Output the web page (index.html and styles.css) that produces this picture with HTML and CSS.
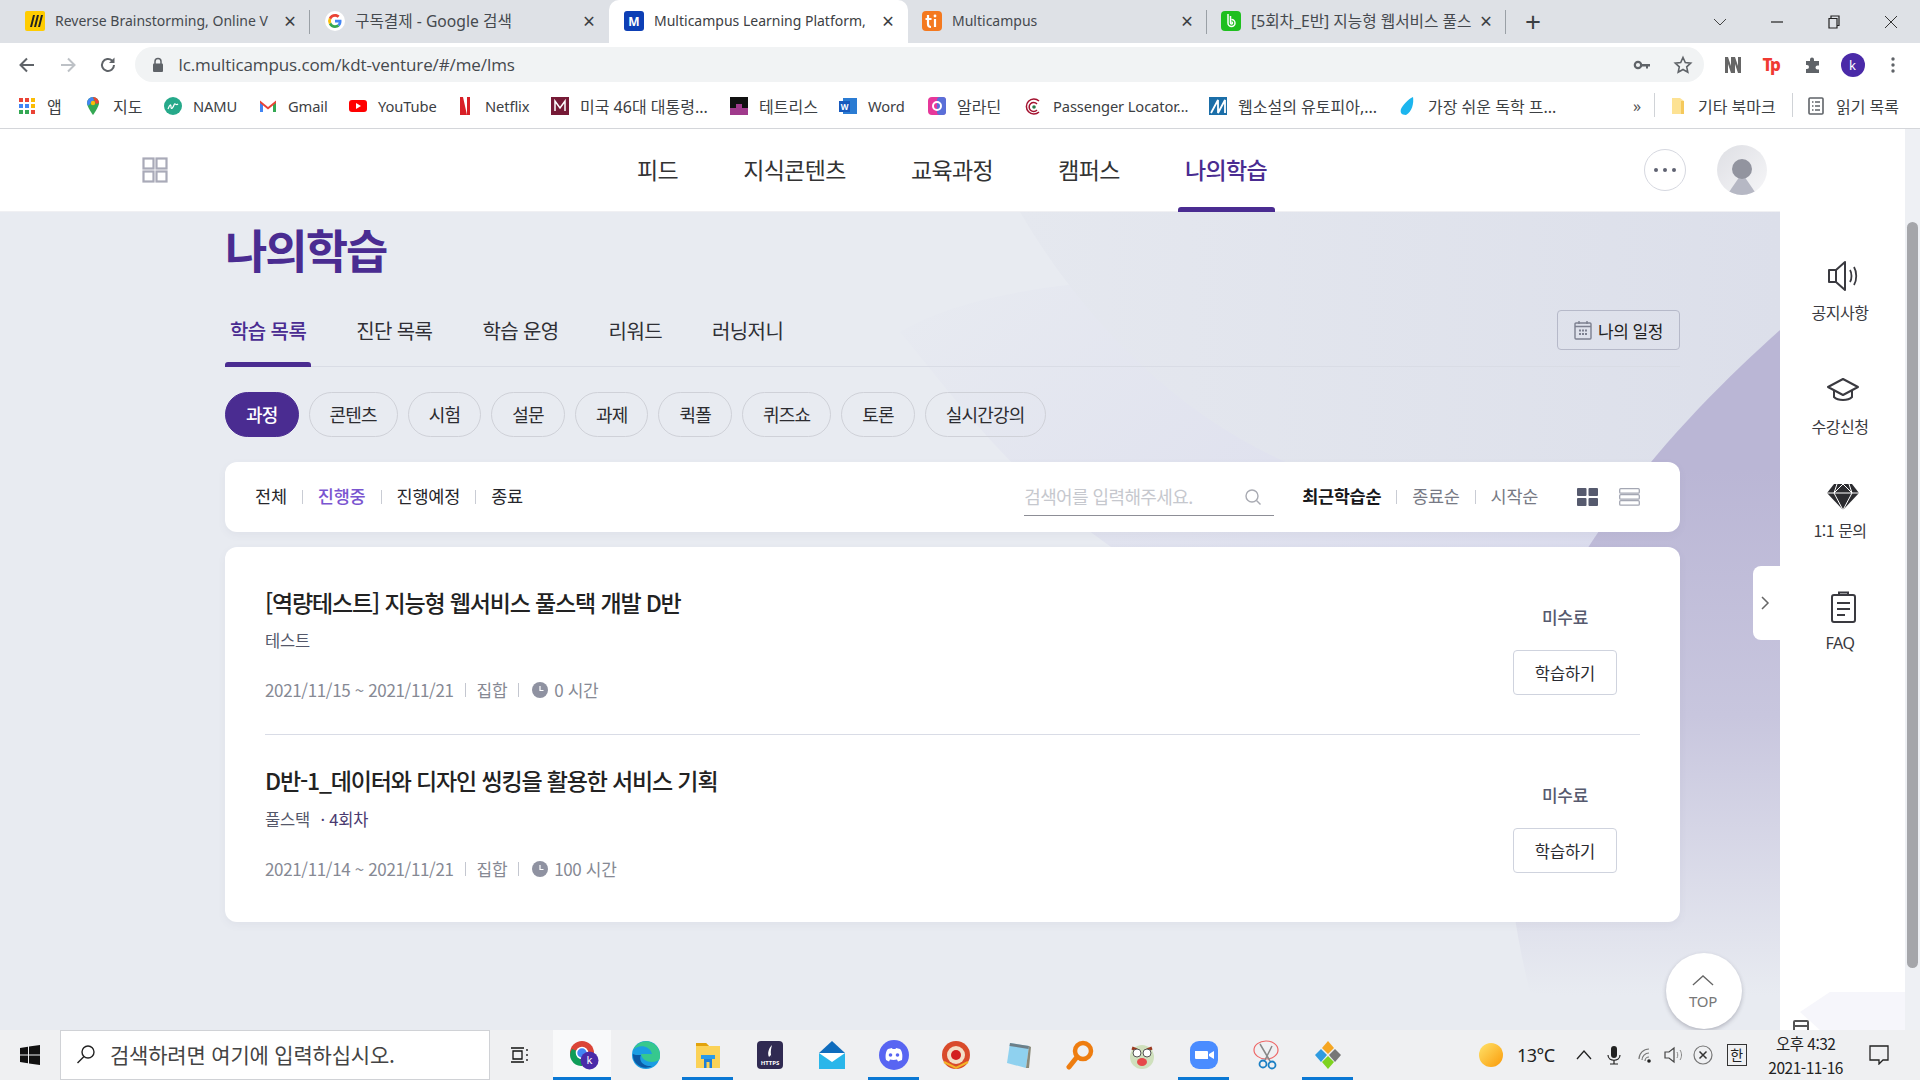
FILE: index.html
```html
<!DOCTYPE html>
<html lang="ko">
<head>
<meta charset="utf-8">
<title>Multicampus Learning Platform</title>
<link rel="stylesheet" href="styles.css">
</head>
<body>
<div class="screen">
  <div class="tabstrip">
    <div class="tab">
      <svg class="fav" viewBox="0 0 20 20"><rect width="20" height="20" rx="2" fill="#fc0"/><path d="M5 16 8 4h2L7 16zM9 16l3-12h2l-3 12zM13 16l3-12h2l-3 12z" fill="#222"/></svg>
      <span class="tab-title">Reverse Brainstorming, Online V</span>
      <span class="tab-x">×</span><i class="tab-sep"></i>
    </div>
    <div class="tab">
      <svg class="fav" viewBox="0 0 20 20"><circle cx="10" cy="10" r="10" fill="#fff"/><path d="M16.5 10.2c0-.5 0-1-.1-1.4H10v2.7h3.7c-.2.9-.7 1.6-1.4 2.1l2.200 1.700c1.300-1.200 2-3 2-5.100z" fill="#4285f4"/><path d="M10 17c1.800 0 3.400-.6 4.500-1.700l-2.200-1.700c-.6.4-1.400.7-2.300.7-1.800 0-3.300-1.200-3.800-2.800l-2.300 1.800C5 15.500 7.300 17 10 17z" fill="#34a853"/><path d="M6.200 11.500a4 4 0 0 1 0-2.900L3.900 6.800a7 7 0 0 0 0 6.500z" fill="#fbbc05"/><path d="M10 5.700c1 0 1.900.4 2.600 1l2-2C13.400 3.600 11.800 3 10 3 7.300 3 5 4.500 3.900 6.800l2.300 1.800C6.700 6.900 8.200 5.700 10 5.700z" fill="#ea4335"/></svg>
      <span class="tab-title tab-ko">구독결제 - Google 검색</span>
      <span class="tab-x">×</span>
    </div>
    <div class="tab tab-active">
      <svg class="fav" viewBox="0 0 20 20"><rect width="20" height="20" rx="3" fill="#0d3fb5"/><text x="10" y="14.500" text-anchor="middle" class="fav-letter">M</text></svg>
      <span class="tab-title">Multicampus Learning Platform,</span>
      <span class="tab-x">×</span>
    </div>
    <div class="tab">
      <svg class="fav" viewBox="0 0 20 20"><rect width="20" height="20" rx="4" fill="#f4791f"/><path d="M6 4v9a3 3 0 0 0 3 3M3.500 8h6M13 8v8" stroke="#fff" stroke-width="2.200" fill="none"/><circle cx="13" cy="5" r="1.400" fill="#fff"/></svg>
      <span class="tab-title">Multicampus</span>
      <span class="tab-x">×</span><i class="tab-sep"></i>
    </div>
    <div class="tab">
      <svg class="fav" viewBox="0 0 20 20"><rect width="20" height="20" rx="4" fill="#1fbf1f"/><path d="M7 3v9a3.500 3.500 0 1 0 3.500-3.500M9.500 5v7a1 1 0 1 0 1-1" stroke="#fff" stroke-width="1.500" fill="none"/></svg>
      <span class="tab-title tab-ko">[5회차_E반] 지능형 웹서비스 풀스</span>
      <span class="tab-x">×</span><i class="tab-sep"></i>
    </div>
    <span class="tab-plus">+</span>
    <div class="win-controls">
      <svg class="win-ic" viewBox="0 0 14 14"><path d="M1 4l6 6 6-6" fill="none" stroke="#444"/></svg>
      <svg class="win-ic" viewBox="0 0 14 14"><path d="M1 7h12" fill="none" stroke="#222" stroke-width="1.200"/></svg>
      <svg class="win-ic" viewBox="0 0 14 14"><path d="M2 3.500h8v9.500H2zM4 3.500V1h8v9.500h-2" fill="none" stroke="#222" stroke-width="1.200"/></svg>
      <svg class="win-ic" viewBox="0 0 14 14"><path d="M1 1l12 12M13 1 1 13" fill="none" stroke="#333"/></svg>
    </div>
  </div>

  <div class="toolbar">
    <svg class="tool-ic" viewBox="0 0 20 20"><path d="M17 10H4M10 3.500 3.500 10l6.500 6.500" fill="none" stroke="#5f6368" stroke-width="2"/></svg>
    <svg class="tool-ic" viewBox="0 0 20 20"><path d="M3 10h13M10 3.500l6.500 6.500-6.500 6.500" fill="none" stroke="#bdc1c6" stroke-width="2"/></svg>
    <svg class="tool-ic" viewBox="0 0 20 20"><path d="M16 10a6 6 0 1 1-1.800-4.300" fill="none" stroke="#5f6368" stroke-width="2"/><path d="M16.500 2.500v5.500H11z" fill="#5f6368"/></svg>
    <div class="omnibox">
      <svg class="lock" viewBox="0 0 12 16"><path d="M3 7V4.500a3 3 0 0 1 6 0V7" fill="none" stroke="#5f6368" stroke-width="1.500"/><rect x="1" y="6.500" width="10" height="8.500" rx="1" fill="#5f6368"/></svg>
      <span class="url">lc.multicampus.com/kdt-venture/#/me/lms</span>
      <svg class="omni-ic" viewBox="0 0 20 20"><circle cx="6" cy="10" r="3.200" fill="none" stroke="#5f6368" stroke-width="2.200"/><path d="M9 9h9v2.500h-2v2h-2v-2H9z" fill="#5f6368"/></svg>
      <svg class="omni-ic" viewBox="0 0 20 20"><path d="m10 2.500 2.300 5 5.400.6-4 3.700 1.100 5.400-4.800-2.700-4.800 2.700 1.100-5.400-4-3.700 5.400-.6z" fill="none" stroke="#5f6368" stroke-width="1.600"/></svg>
    </div>
    <div class="ext">
      <svg class="omni-ic" viewBox="0 0 20 20"><path d="M2 18V2h3l3 9V2h4l3 9V2h3v16h-3l-3-9v9H8l-3-9v9z" fill="#666"/></svg>
      <span class="ext-tp">Tp</span>
      <svg class="omni-ic" viewBox="0 0 20 20"><path d="M3 6h4V4.500a2 2 0 0 1 4 0V6h5v4.500h-1.500a2 2 0 0 0 0 4H16V18H3v-4h1a2 2 0 0 0 0-4H3z" fill="#5f6368"/></svg>
      <span class="ext-avatar">k</span>
      <svg class="omni-ic" viewBox="0 0 20 20"><circle cx="10" cy="4" r="1.700" fill="#5f6368"/><circle cx="10" cy="10" r="1.700" fill="#5f6368"/><circle cx="10" cy="16" r="1.700" fill="#5f6368"/></svg>
    </div>
  </div>

  <div class="bookmarks">
    <div class="bm bm-ko"><svg class="bm-ic" viewBox="0 0 18 18"><rect x="1" y="1" width="4" height="4" fill="#ea4335"/><rect x="7" y="1" width="4" height="4" fill="#ea4335"/><rect x="13" y="1" width="4" height="4" fill="#fbbc05"/><rect x="1" y="7" width="4" height="4" fill="#4285f4"/><rect x="7" y="7" width="4" height="4" fill="#4285f4"/><rect x="13" y="7" width="4" height="4" fill="#fbbc05"/><rect x="1" y="13" width="4" height="4" fill="#34a853"/><rect x="7" y="13" width="4" height="4" fill="#34a853"/><rect x="13" y="13" width="4" height="4" fill="#ea4335"/></svg>앱</div>
    <div class="bm bm-ko"><svg class="bm-ic" viewBox="0 0 18 18"><path d="M9 0a6 6 0 0 1 6 6c0 4-6 12-6 12S3 10 3 6a6 6 0 0 1 6-6z" fill="#34a853"/><path d="M3 6a6 6 0 0 1 6-6l1 3-6 6z" fill="#4285f4"/><path d="M9 0a6 6 0 0 1 6 6l-3 1z" fill="#ea4335"/><circle cx="9" cy="6" r="2.200" fill="#fbbc05"/></svg>지도</div>
    <div class="bm"><svg class="bm-ic" viewBox="0 0 18 18"><circle cx="9" cy="9" r="9" fill="#26a98a"/><path d="M4 12c2-5 3-5 3-2s2 1 3-2 2 1 4-1" stroke="#fff" fill="none" stroke-width="1.200"/></svg>NAMU</div>
    <div class="bm"><svg class="bm-ic" viewBox="0 0 18 18"><path d="M1 4v11h3V8z" fill="#4285f4"/><path d="M17 4v11h-3V8z" fill="#34a853"/><path d="M1 3.500 9 10l8-6.500V6l-8 6.500L1 6z" fill="#ea4335"/></svg>Gmail</div>
    <div class="bm"><svg class="bm-ic" viewBox="0 0 18 18"><rect y="3" width="18" height="12" rx="3" fill="#f00"/><path d="m7 6 5 3-5 3z" fill="#fff"/></svg>YouTube</div>
    <div class="bm"><svg class="bm-ic" viewBox="0 0 18 18"><path d="M4 0h3l4 18H7zM4 0h3v18H4zM11 0h3v18h-3z" fill="#d81f26"/></svg>Netflix</div>
    <div class="bm bm-ko"><svg class="bm-ic" viewBox="0 0 18 18"><rect width="18" height="18" fill="#761a36"/><path d="M4 14V4l5 7 5-7v10" stroke="#fff" fill="none" stroke-width="1.500"/></svg>미국 46대 대통령...</div>
    <div class="bm bm-ko"><svg class="bm-ic" viewBox="0 0 18 18"><rect width="18" height="18" fill="#111"/><rect y="11" width="18" height="7" fill="#a03a8c"/><rect x="6" y="7" width="6" height="5" fill="#a03a8c"/></svg>테트리스</div>
    <div class="bm"><svg class="bm-ic" viewBox="0 0 18 18"><rect x="4" y="1" width="14" height="16" fill="#2b7cd3"/><rect y="4" width="11" height="11" fill="#185abd"/><text x="5.500" y="13" text-anchor="middle" class="bm-letter">W</text></svg>Word</div>
    <div class="bm bm-ko"><svg class="bm-ic" viewBox="0 0 18 18"><rect width="18" height="18" rx="4" fill="#e6379a"/><rect x="9" width="9" height="18" rx="3" fill="#5a6fd8"/><circle cx="9" cy="9" r="4" fill="none" stroke="#fff" stroke-width="2"/></svg>알라딘</div>
    <div class="bm"><svg class="bm-ic" viewBox="0 0 18 18"><path d="M15 4a7.500 7.500 0 1 0 0 11M13 7a4.500 4.500 0 1 0 0 6" fill="none" stroke="#a3122f" stroke-width="1.500"/><circle cx="10" cy="10" r="1.800" fill="#2a7a4a"/></svg>Passenger Locator...</div>
    <div class="bm bm-ko"><svg class="bm-ic" viewBox="0 0 18 18"><rect width="18" height="18" fill="#1b6ea8"/><path d="M2 16 9 3v13l7-13v13" stroke="#fff" fill="none" stroke-width="1.800"/></svg>웹소설의 유토피아,...</div>
    <div class="bm bm-ko"><svg class="bm-ic" viewBox="0 0 18 18"><path d="M14 0c1 6-1 15-7 18-5 0-6-3-5-6S9 2 14 0z" fill="#1cb5ee"/></svg>가장 쉬운 독학 프...</div>
    <span class="bm-more">»</span>
    <div class="bm bm-ko bm-sep"><svg class="bm-ic" viewBox="0 0 18 18"><path d="M3 1h8l4 3v13H3z" fill="#fde293"/><path d="M12 4h3v13h-3z" fill="#f5c95c"/></svg>기타 북마크</div>
    <div class="bm bm-ko bm-sep"><svg class="bm-ic" viewBox="0 0 18 18"><rect x="2" y="1" width="14" height="16" rx="1" fill="none" stroke="#5f6368" stroke-width="1.600"/><path d="M5 5h1.500M8 5h5M5 9h1.500M8 9h5M5 13h1.500M8 13h5" stroke="#5f6368" stroke-width="1.500"/></svg>읽기 목록</div>
  </div>

  <div class="viewport">
    <div class="content">
      <header class="site-header">
        <svg class="apps" viewBox="0 0 26 26"><g fill="none" stroke="#a9aab8" stroke-width="2.200"><rect x="1.500" y="1.500" width="10" height="10"/><rect x="14.500" y="1.500" width="10" height="10"/><rect x="1.500" y="14.500" width="10" height="10"/><rect x="14.500" y="14.500" width="10" height="10"/></g></svg>
        <nav class="gnb">
          <a class="gnb-item">피드</a>
          <a class="gnb-item">지식콘텐츠</a>
          <a class="gnb-item">교육과정</a>
          <a class="gnb-item">캠퍼스</a>
          <a class="gnb-item gnb-on">나의학습</a>
        </nav>
        <span class="more"><i></i><i></i><i></i></span>
        <svg class="me" viewBox="0 0 50 50"><defs><linearGradient id="av" x1="0" y1="0" x2="1" y2="1"><stop offset="0" stop-color="#dedfe4"/><stop offset="1" stop-color="#f6f6f8"/></linearGradient><clipPath id="avc"><circle cx="25" cy="25" r="25"/></clipPath></defs><circle cx="25" cy="25" r="25" fill="url(#av)"/><g clip-path="url(#avc)"><path d="M25 28 40 50H10z" fill="#b6b8c4"/><circle cx="25" cy="24" r="10" fill="#92949f"/></g></svg>
      </header>

      <main class="page">
        <svg class="page-bg" viewBox="0 0 1780 818" preserveAspectRatio="none">
          <defs>
            <linearGradient id="pur" x1="0" y1="0" x2="0" y2="1"><stop offset="0.2" stop-color="#bab6d5"/><stop offset="0.55" stop-color="#c8c6de"/><stop offset="0.95" stop-color="#e8ebf1"/></linearGradient>
            <linearGradient id="lav" x1="0" y1="0" x2="1" y2="0.600"><stop offset="0" stop-color="#e8ebf1"/><stop offset="1" stop-color="#d8d9ec"/></linearGradient>
            <linearGradient id="up" x1="0" y1="0" x2="1" y2="0"><stop offset="0" stop-color="#e5e8ef"/><stop offset="1" stop-color="#dcdfea"/></linearGradient>
          </defs>
          <rect width="1780" height="818" fill="#e8ebf1"/>
          <path d="M900 120C1000 240 1100 400 1500 500L1780 500V60L1500 60C1200 60 1000 60 900 120z" fill="url(#lav)"/>
          <path d="M1020 0C1120 170 1280 290 1470 290 1600 290 1720 250 1780 200V0z" fill="url(#up)"/>
          <path d="M1780 118C1700 190 1600 290 1530 440 1500 560 1500 660 1530 780L1780 818z" fill="url(#pur)"/>
        </svg>
        <h1 class="page-title">나의학습</h1>
        <div class="tabs">
          <a class="tab-link tab-link-on">학습 목록</a>
          <a class="tab-link">진단 목록</a>
          <a class="tab-link">학습 운영</a>
          <a class="tab-link">리워드</a>
          <a class="tab-link">러닝저니</a>
          <button class="schedule"><svg class="cal" viewBox="0 0 18 20"><g fill="none" stroke="#7d8090" stroke-width="1.400"><rect x="1" y="3" width="16" height="16" rx="1"/><path d="M1 6.500h16M5 1v3M13 1v3"/></g><g fill="#7d8090"><rect x="5" y="9.500" width="2" height="2"/><rect x="8" y="9.500" width="2" height="2"/><rect x="11" y="9.500" width="2" height="2"/><rect x="5" y="13" width="2" height="2"/><rect x="8" y="13" width="2" height="2"/><rect x="11" y="13" width="2" height="2"/></g></svg>나의 일정</button>
        </div>
        <div class="pills">
          <a class="pill pill-on">과정</a><a class="pill">콘텐츠</a><a class="pill">시험</a><a class="pill">설문</a><a class="pill">과제</a><a class="pill">퀵폴</a><a class="pill">퀴즈쇼</a><a class="pill">토론</a><a class="pill">실시간강의</a>
        </div>
        <section class="filter">
          <a class="f-item">전체</a><i class="f-sep"></i>
          <a class="f-item f-on">진행중</a><i class="f-sep"></i>
          <a class="f-item">진행예정</a><i class="f-sep"></i>
          <a class="f-item">종료</a>
          <div class="search">
            <span class="search-ph">검색어를 입력해주세요.</span>
            <svg class="search-ic" viewBox="0 0 18 18"><circle cx="8" cy="8" r="6" fill="none" stroke="#a8aab2" stroke-width="1.400"/><path d="m12.500 12.500 4 4" stroke="#a8aab2" stroke-width="1.400"/></svg>
          </div>
          <a class="s-item s-on">최근학습순</a><i class="f-sep"></i>
          <a class="s-item">종료순</a><i class="f-sep"></i>
          <a class="s-item">시작순</a>
          <svg class="view-a" viewBox="0 0 21 18"><g fill="#565a6e"><rect width="9.500" height="8" rx="1"/><rect x="11.500" width="9.500" height="8" rx="1"/><rect y="10" width="9.500" height="8" rx="1"/><rect x="11.500" y="10" width="9.500" height="8" rx="1"/></g></svg>
          <svg class="view-b" viewBox="0 0 21 18"><g fill="none" stroke="#a4a7b3" stroke-width="1.300"><rect x=".7" y=".7" width="19.600" height="4.500" rx="1"/><rect x=".7" y="6.700" width="19.600" height="4.500" rx="1"/><rect x=".7" y="12.700" width="19.600" height="4.500" rx="1"/></g></svg>
        </section>
        <section class="courses">
          <article class="course course-line">
            <div class="c-main">
              <h2 class="c-title">[역량테스트] 지능형 웹서비스 풀스택 개발 D반</h2>
              <p class="c-sub">테스트</p>
              <p class="c-meta">2021/11/15 ~ 2021/11/21<i class="m-sep"></i>집합<i class="m-sep"></i><svg class="clock" viewBox="0 0 16 16"><circle cx="8" cy="8" r="8" fill="#8f92a1"/><path d="M8 4v4.500h3.500" stroke="#fff" fill="none" stroke-width="1.200"/></svg>0 시간</p>
            </div>
            <div class="c-side"><span class="c-status">미수료</span><button class="c-btn">학습하기</button></div>
          </article>
          <article class="course">
            <div class="c-main">
              <h2 class="c-title">D반-1_데이터와 디자인 씽킹을 활용한 서비스 기획</h2>
              <p class="c-sub">풀스택 <span class="c-sub-b">· 4회차</span></p>
              <p class="c-meta">2021/11/14 ~ 2021/11/21<i class="m-sep"></i>집합<i class="m-sep"></i><svg class="clock" viewBox="0 0 16 16"><circle cx="8" cy="8" r="8" fill="#8f92a1"/><path d="M8 4v4.500h3.500" stroke="#fff" fill="none" stroke-width="1.200"/></svg>100 시간</p>
            </div>
            <div class="c-side"><span class="c-status">미수료</span><button class="c-btn">학습하기</button></div>
          </article>
        </section>
        <span class="drawer-tab"><svg class="drawer-ic" viewBox="0 0 10 16"><path d="m2 2 6 6-6 6" fill="none" stroke="#666" stroke-width="1.500"/></svg></span>
        <a class="top-btn"><svg class="top-ic" viewBox="0 0 24 12"><path d="m1 11 11-10 11 10" fill="none" stroke="#666" stroke-width="1.400"/></svg>TOP</a>
      </main>
    </div>

    <aside class="side">
      <a class="side-item"><svg class="side-ic" viewBox="0 0 36 36"><path d="M4 12h7v12H4zM11 12l9-8v28l-9-8" fill="none" stroke="#3a3a40" stroke-width="2" stroke-linejoin="round"/><path d="M25 12c2 3 2 9 0 12M29 9c3 5 3 13 0 18" fill="none" stroke="#3a3a40" stroke-width="1.800"/></svg>공지사항</a>
      <a class="side-item side-b"><svg class="side-ic" viewBox="0 0 36 36"><path d="M18 7 3 15l15 8 15-8z" fill="none" stroke="#3a3a40" stroke-width="2" stroke-linejoin="round"/><path d="M9 18.500V25c4 4 14 4 18 0v-6.500" fill="none" stroke="#3a3a40" stroke-width="2"/></svg>수강신청</a>
      <a class="side-item side-c"><svg class="side-ic" viewBox="0 0 36 36"><path d="M9 6h18l7 9-16 17L2 15z" fill="#2c2c30"/><path d="M2 15h32M12 6l-3 9 9 17 9-17-3-9M18 6l-9 9M18 6l9 9" fill="none" stroke="#fff" stroke-width="1"/></svg>1:1 문의</a>
      <a class="side-item side-d"><svg class="side-ic" viewBox="0 0 36 36"><rect x="7" y="6" width="23" height="27" rx="2" fill="none" stroke="#3a3a40" stroke-width="2"/><path d="M14 6V3.500h9V6M12 14h13M12 20h13M12 26h8" fill="none" stroke="#3a3a40" stroke-width="2"/></svg>FAQ</a>
      <svg class="side-deco" viewBox="0 0 125 38"><path d="M20 20 50 0h75v38H40z" fill="#f6f6fb"/></svg>
      <svg class="side-cut" viewBox="0 0 16 10"><path d="M1 10V2a1 1 0 0 1 1-1h12a1 1 0 0 1 1 1v8M1 6h14" fill="none" stroke="#555" stroke-width="2"/></svg>
    </aside>
    <div class="scrollbar"><span class="thumb"></span></div>
  </div>

  <footer class="taskbar">
    <svg class="start" viewBox="0 0 20 20"><path d="M0 3l8-1.200V9.500H0zM9 1.600 20 0v9.500H9zM0 10.500h8v7.700L0 17zM9 10.500h11V20L9 18.400z" fill="#111"/></svg>
    <div class="tb-search">
      <svg class="tb-glass" viewBox="0 0 20 20"><circle cx="12" cy="8" r="6" fill="none" stroke="#222" stroke-width="1.400"/><path d="M8 12.500 1.500 19" stroke="#222" stroke-width="1.400"/></svg>
      <span>검색하려면 여기에 입력하십시오.</span>
    </div>
    <svg class="taskview" viewBox="0 0 20 20"><path d="M1 3h13M1 17h13M3 6h9v8H3zM17 4v2M17 9v2M17 14v2" fill="none" stroke="#111" stroke-width="1.300"/></svg>
    <div class="tb-apps">
      <span class="tb-app tb-hot tb-run"><svg class="tb-ic" viewBox="0 0 30 30"><circle cx="13" cy="13" r="12" fill="#db4437"/><path d="M13 13 3 9a11 11 0 0 0 10 17z" fill="#0f9d58"/><path d="M13 13h11a11 11 0 0 1-11 13z" fill="#fbc02d"/><circle cx="13" cy="13" r="5.500" fill="#4285f4" stroke="#fff" stroke-width="1.500"/><circle cx="20.500" cy="20.500" r="9" fill="#4a2aa8"/><text x="20.500" y="24" text-anchor="middle" class="tb-k">k</text></svg></span>
      <span class="tb-app"><svg class="tb-ic" viewBox="0 0 30 30"><circle cx="15" cy="15" r="14" fill="#1b9de2"/><path d="M29 15a14 14 0 0 0-27-5c5-6 17-5 19 4H10c1 8 12 10 18 6 1-2 1-3 1-5z" fill="#36c88e"/><path d="M10 15c-3 6 3 12 11 11-9 5-20-2-19-12 1 1 4 1 8 1z" fill="#0c59a4"/></svg></span>
      <span class="tb-app tb-run"><svg class="tb-ic" viewBox="0 0 30 30"><path d="M3 3h10l3 3h11v22H3z" fill="#fbd257"/><path d="M3 3h10l3 3H3z" fill="#e2a30d"/><path d="M11 28V18h8v10h-2.500v-6h-3v6z" fill="#1e7fd8"/><rect x="8" y="15" width="14" height="4" fill="#2b9be8"/></svg></span>
      <span class="tb-app"><svg class="tb-ic" viewBox="0 0 30 30"><rect x="2" y="1" width="26" height="28" rx="4" fill="#302a52"/><path d="M17 5c-3 3-5 8-3 12l2-2 1 3c-2-5-1-9 0-13z" fill="#fff"/><text x="15" y="25" text-anchor="middle" class="tb-https">HTTPS</text></svg></span>
      <span class="tb-app"><svg class="tb-ic" viewBox="0 0 30 30"><path d="M2 13 15 1l13 12v16H2z" fill="#0f6cbd"/><path d="M2 13h26v16H2z" fill="#29b6ea"/><path d="M2 13l13 9 13-9" fill="#fff"/></svg></span>
      <span class="tb-app tb-run"><svg class="tb-ic" viewBox="0 0 30 30"><circle cx="15" cy="15" r="15" fill="#5865f2"/><path d="M7 20c-1-5 0-9 2-11l4-1 .5 1h3l.5-1 4 1c2 2 3 6 2 11l-4 1.500-1-2c-2 .6-5 .6-7 0l-1 2z" fill="#fff"/><circle cx="11.500" cy="15" r="1.800" fill="#5865f2"/><circle cx="18.500" cy="15" r="1.800" fill="#5865f2"/></svg></span>
      <span class="tb-app"><svg class="tb-ic" viewBox="0 0 30 30"><circle cx="15" cy="15" r="14" fill="#d94b2b"/><circle cx="15" cy="15" r="9" fill="#f3dfc8"/><circle cx="15" cy="15" r="5" fill="#d32020"/><path d="M3 22 15 28l12-6" fill="none" stroke="#f4b428" stroke-width="2"/></svg></span>
      <span class="tb-app"><svg class="tb-ic" viewBox="0 0 30 30"><path d="M7 3 26 6l-3 22-19-5z" fill="#8fd1ef"/><path d="M23 28l3-22 2 1-2 21z" fill="#8a8a7a"/><path d="M7 3 26 6l-.5 3L6.500 6z" fill="#6d7f88"/></svg></span>
      <span class="tb-app"><svg class="tb-ic" viewBox="0 0 30 30"><circle cx="18" cy="11" r="8" fill="none" stroke="#ee7d10" stroke-width="4.500"/><path d="M12 17 4 27" stroke="#ee7d10" stroke-width="5" stroke-linecap="round"/></svg></span>
      <span class="tb-app"><svg class="tb-ic" viewBox="0 0 30 30"><circle cx="15" cy="17" r="12" fill="#cfe0bd"/><path d="M5 8l5 2M25 8l-5 2" stroke="#9a3a20" stroke-width="3"/><circle cx="10" cy="13" r="4" fill="#fff" stroke="#555"/><circle cx="20" cy="13" r="4" fill="#fff" stroke="#555"/><ellipse cx="15" cy="22" rx="5" ry="4" fill="#e6484a"/></svg></span>
      <span class="tb-app tb-run"><svg class="tb-ic" viewBox="0 0 30 30"><rect x="1" y="1" width="28" height="28" rx="9" fill="#4a8cff"/><path d="M6 11h12a1 1 0 0 1 1 1v7H7a1 1 0 0 1-1-1zM20 14l5-3v8l-5-3z" fill="#fff"/></svg></span>
      <span class="tb-app"><svg class="tb-ic" viewBox="0 0 30 30"><ellipse cx="15" cy="10" rx="12" ry="9" fill="none" stroke="#e66" stroke-width="1.200"/><path d="M9 4 19 21M21 6 14 20" stroke="#888" stroke-width="1.500"/><circle cx="12" cy="24" r="3.500" fill="none" stroke="#1b7fc4" stroke-width="1.800"/><circle cx="21" cy="25" r="3.500" fill="none" stroke="#1b7fc4" stroke-width="1.800"/></svg></span>
      <span class="tb-app tb-run"><svg class="tb-ic" viewBox="0 0 30 30"><path d="M15 1l6 7-6 6-6-6z" fill="#f5a623"/><path d="M8 9l6 6-6 7-6-7z" fill="#2f9be0"/><path d="M22 9l6 6-6 7-6-7z" fill="#777"/><path d="M15 16l6 6-6 7-6-7z" fill="#7ed321"/></svg></span>
    </div>
    <div class="tray">
      <svg class="sun" viewBox="0 0 24 24"><defs><linearGradient id="s" x1="0" y1="0" x2="1" y2="1"><stop offset="0" stop-color="#ffe36b"/><stop offset="1" stop-color="#fa9a08"/></linearGradient></defs><circle cx="12" cy="12" r="12" fill="url(#s)"/></svg>
      <span class="temp">13°C</span>
      <svg class="tray-ic tray-caret" viewBox="0 0 20 20"><path d="m3 14 7-8 7 8" fill="none" stroke="#222" stroke-width="1.300"/></svg>
      <svg class="tray-ic" viewBox="0 0 20 20"><rect x="7" y="1" width="6" height="12" rx="3" fill="#222"/><path d="M4 10c0 7 12 7 12 0M10 15v4M6 19h8" stroke="#222" fill="none" stroke-width="1.200"/></svg>
      <svg class="tray-ic tray-wifi" viewBox="0 0 20 20"><path d="M2 14a10 10 0 0 1 10-10M5 15a7 7 0 0 1 7-7M8 16a4 4 0 0 1 4-4" stroke="#777" fill="none" stroke-width="1.200"/><circle cx="12" cy="16" r="1.800" fill="#222"/></svg>
      <svg class="tray-ic tray-spk" viewBox="0 0 20 20"><path d="M2 7h4l5-4v14l-5-4H2z" fill="none" stroke="#444" stroke-width="1.200"/><path d="M14 7c1 2 1 4 0 6M17 5c2 3 2 7 0 10" fill="none" stroke="#888" stroke-width="1"/></svg>
      <svg class="tray-ic" viewBox="0 0 20 20"><circle cx="10" cy="10" r="9" fill="none" stroke="#777" stroke-width="1.200"/><path d="m6.500 6.500 7 7M13.500 6.500l-7 7" stroke="#333" stroke-width="1.500"/></svg>
      <span class="ime">한</span>
      <span class="clock-txt"><span>오후 4:32</span><span>2021-11-16</span></span>
      <svg class="notif" viewBox="0 0 20 20"><path d="M1 1h18v14h-5l-4 4v-4H1z" fill="none" stroke="#222" stroke-width="1.300"/></svg>
    </div>
  </footer>
</div>
</body>
</html>
```
FILE: styles.css
```css
* { box-sizing: border-box; }
html, body { margin: 0; height: 100%; overflow: hidden; }
body { font-family: "Noto Sans CJK KR", "Noto Sans", sans-serif; color: #222; }
a { color: inherit; text-decoration: none; }
h1, h2, p { margin: 0; font-weight: normal; }
button { font: inherit; background: none; cursor: pointer; }
i { font-style: normal; display: block; }

.screen { width: 1920px; height: 1080px; display: flex; flex-direction: column; }

/* browser chrome */
.tabstrip { height: 43px; background: #dee1e6; display: flex; padding: 0 0 0 11px; flex: none; }
.tab { width: 299px; height: 43px; display: flex; align-items: center; padding: 0 12px 2px 14px; position: relative; font-family: "Noto Sans", "Noto Sans CJK KR", sans-serif; font-size: 14px; color: #45494e; }
.tab:nth-child(2) { padding-left: 15px; }
.tab-active { background: #fff; border-radius: 10px 10px 0 0; padding-left: 15px; color: #3c4043; }
.fav { width: 20px; height: 20px; flex: none; margin-right: 10px; }
.fav-letter { fill: #fff; font: 700 12px "Noto Sans", sans-serif; }
.tab-title { flex: 1; min-width: 0; white-space: nowrap; overflow: hidden; }
.tab-ko { font-size: 15.700px; }
.tab-x { width: 16px; margin-left: 6px; text-align: center; font-size: 21px; line-height: 20px; color: #3c4043; flex: none; }
.tab-sep { position: absolute; right: 0; top: 10px; height: 24px; width: 1px; background: #9aa0a6; }
.tab-plus { width: 54px; text-align: center; font: 400 28px/43px "Noto Sans", sans-serif; color: #3c4043; }
.win-controls { margin-left: auto; display: flex; align-items: center; gap: 43px; padding-right: 22px; }
.win-ic { width: 14px; height: 14px; }

.toolbar { height: 43px; background: #fff; display: flex; align-items: center; padding-left: 17px; flex: none; }
.tool-ic { width: 20px; height: 20px; margin-right: 20.500px; flex: none; }
.omnibox { width: 1569px; height: 35px; margin-left: -4px; background: #f1f3f4; border-radius: 18px; display: flex; align-items: center; padding: 0 11px 0 17px; }
.lock { width: 12px; height: 16px; }
.url { margin-left: 15px; font: 17px "Open Sans", "Noto Sans", sans-serif; letter-spacing: -.1px; color: #45494e; }
.omni-ic { width: 20px; height: 20px; flex: none; }
.omnibox .omni-ic:nth-of-type(2) { margin-left: auto; }
.omnibox .omni-ic:last-child { margin-left: 21px; }
.ext { display: flex; align-items: center; gap: 20px; padding-left: 19px; }
.ext-tp { width: 20px; font: 800 17px/20px "Noto Sans", sans-serif; color: #f03a32; letter-spacing: -1.500px; }
.ext-avatar { width: 24px; height: 24px; margin: 0 -2px; border-radius: 50%; background: #4a2aa8; color: #fff; font: 13px/24px "Noto Sans", sans-serif; text-align: center; }

.bookmarks { height: 43px; padding: 0 0 3px 18px; background: #fff; border-bottom: 1px solid #d4d6da; flex: none; display: grid; grid-template-columns: 66px 80px 95px 90px 107px 95px 179px 109px 89px 96px 185px 190px 234px 24px 138px 100px; align-items: center; font: 14.700px "Noto Sans", "Noto Sans CJK KR", sans-serif; color: #3c4043; }
.bm { display: flex; align-items: center; gap: 11px; white-space: nowrap; position: relative; letter-spacing: -.1px; }
.bm-ko { font-size: 16px; letter-spacing: 0; }
.bm-ic { width: 18px; height: 18px; flex: none; }
.bm-letter { fill: #fff; font: 700 8px "Noto Sans", sans-serif; }
.bm-more { font-size: 16px; color: #555; }
.bm-sep::before { content: ""; position: absolute; left: -3px; top: -1px; height: 24px; width: 1px; background: #d0d3d7; }
.bm-sep { padding-left: 12px; }

.viewport { flex: 1; min-height: 0; display: flex; }
.content { width: 1780px; display: flex; flex-direction: column; overflow: hidden; isolation: isolate; }

.site-header { height: 83px; background: #fff; display: flex; align-items: center; padding: 0 13px 0 142px; flex: none; position: relative; z-index: 2; border-bottom: 1px solid #f0f0f3; }
.apps { width: 26px; height: 26px; flex: none; }
.gnb { display: flex; height: 83px; margin-left: 469px; gap: 65px; }
.gnb-item { font-size: 23px; line-height: 80px; letter-spacing: -.6px; position: relative; color: #333; white-space: nowrap; }
.gnb-on { color: #4a2c91; font-weight: 500; }
.gnb-on::after { content: ""; position: absolute; left: -7px; right: -8px; bottom: 0; height: 5px; background: #4a2c91; border-radius: 3px 3px 0 0; }
.more { width: 42px; height: 42px; margin-left: auto; border: 1px solid #d6d8e0; border-radius: 50%; display: flex; align-items: center; justify-content: center; gap: 5px; flex: none; }
.more i { width: 4px; height: 4px; border-radius: 50%; background: #5f6272; }
.me { width: 50px; height: 50px; margin-left: 31px; flex: none; }

.page { flex: 1; min-height: 0; position: relative; padding: 14px 100px 0 225px; }
.page-bg { position: absolute; left: 0; top: 0; width: 100%; height: 100%; z-index: -1; }
.page-title { font-size: 46px; line-height: 44px; font-weight: 700; letter-spacing: -2px; color: #4a2c91; }
.tabs { display: flex; height: 69px; margin-top: 28px; border-bottom: 1px solid #d9dce5; gap: 40px; }
.tab-link { padding: 20px 5px 0; font-size: 20px; line-height: 26px; letter-spacing: -.6px; color: #2f2f35; position: relative; white-space: nowrap; }
.tab-link-on { color: #4a2c91; font-weight: 500; }
.tab-link-on::after { content: ""; position: absolute; left: 0; right: 0; bottom: -1px; height: 5px; background: #4a2c91; border-radius: 3px 3px 0 0; }
.schedule { margin: 12px 0 0 auto; width: 123px; height: 40px; padding-bottom: 1px; border: 1px solid #b6b9c9; border-radius: 4px; display: flex; align-items: center; justify-content: center; gap: 6px; font-size: 17px; letter-spacing: -.5px; color: #222; }
.cal { width: 18px; height: 20px; }

.pills { display: flex; gap: 10px; margin-top: 25px; }
.pill { height: 45px; padding: 0 20px; border: 1px solid #cfd1d8; border-radius: 23px; font-size: 18px; line-height: 42px; letter-spacing: -.8px; color: #2c2c30; white-space: nowrap; }
.pill-on { background: #4a2c91; border-color: #4a2c91; color: #fff; font-weight: 500; }

.filter { height: 70px; margin-top: 25px; background: #fff; border-radius: 12px; box-shadow: 0 3px 8px rgba(80, 80, 120, .06); display: flex; align-items: center; padding: 0 40px 0 30px; font-size: 17.500px; letter-spacing: -.2px; }
.f-item, .s-item { padding-bottom: 4px; white-space: nowrap; }
.f-item { color: #26262b; }
.f-on { color: #7a55d0; font-weight: 500; }
.f-sep { width: 1px; height: 14px; background: #c9ccd4; margin: 0 15px; }
.search { width: 250px; height: 37px; margin-left: auto; margin-right: 28px; border-bottom: 1.500px solid #8d8e96; display: flex; align-items: center; justify-content: space-between; padding-right: 12px; }
.search-ph { color: #c6c8ce; font-size: 18px; letter-spacing: -.6px; padding-bottom: 2px; }
.search-ic { width: 18px; height: 18px; }
.s-item { color: #777a85; letter-spacing: -.3px; }
.s-on { color: #17171a; font-weight: 700; }
.view-a { width: 21px; height: 18px; margin: 0 0 1px 39px; }
.view-b { width: 21px; height: 18px; margin: 0 0 1px 21px; }

.courses { margin-top: 15px; background: #fff; border-radius: 12px; box-shadow: 0 3px 8px rgba(80, 80, 120, .06); padding: 10px 40px 9px; }
.course { display: flex; justify-content: space-between; padding: 29px 0 32px; }
.course-line { border-bottom: 1px solid #d9dce6; }
.c-title { font-size: 23px; line-height: 32px; font-weight: 500; letter-spacing: -1.150px; color: #222; }
.c-sub { margin-top: 10px; font-size: 16.500px; line-height: 24px; letter-spacing: -.2px; color: #55586a; }
.course + .course .c-sub { margin-top: 11px; }
.c-sub-b { color: #4a3a70; margin-left: 6px; }
.c-meta { margin-top: 26px; display: flex; align-items: center; font-size: 17px; line-height: 24px; letter-spacing: -.35px; color: #868994; }
.m-sep { width: 1px; height: 14px; background: #c4c7d0; margin: 0 11px; }
.m-sep + .clock { margin-left: 2px; }
.clock { width: 16px; height: 16px; margin-right: 6px; }
.c-side { width: 104px; margin-right: 23px; display: flex; flex-direction: column; align-items: center; padding-top: 19px; }
.c-status { font-size: 17px; line-height: 24px; font-weight: 500; color: #565a6e; letter-spacing: -.3px; }
.c-btn { width: 104px; height: 45px; margin-top: 21px; border: 1px solid #cfd3de; border-radius: 4px; font-size: 16.500px; letter-spacing: -.1px; color: #2a2a30; }

.drawer-tab { position: absolute; right: 0; top: 354px; width: 27px; height: 74px; padding-right: 4px; background: #fff; border-radius: 8px 0 0 8px; display: flex; align-items: center; justify-content: center; }
.drawer-ic { width: 10px; height: 16px; }
.top-btn { position: absolute; left: 1666px; top: 741px; width: 76px; height: 76px; padding: 3px 2px 0 0; border-radius: 50%; background: #fff; box-shadow: 0 2px 4px rgba(60, 60, 80, .3); display: flex; flex-direction: column; align-items: center; justify-content: center; font: 15px/18px "Noto Sans", sans-serif; color: #777; letter-spacing: -.3px; gap: 6px; }
.top-ic { width: 22px; height: 11px; }

.side { width: 125px; background: #fff; padding: 129px 5px 0 0; display: flex; flex-direction: column; align-items: center; position: relative; overflow: hidden; flex: none; }
.side-item { display: flex; flex-direction: column; align-items: center; gap: 7px; font-size: 16px; line-height: 22px; letter-spacing: -.5px; color: #3a3a40; }
.side-ic { width: 36px; height: 36px; margin-left: 6px; }
.side-b { margin-top: 49px; }
.side-c { margin-top: 41px; gap: 5px; }
.side-d { margin-top: 48px; font-family: "Noto Sans", sans-serif; }
.side-deco { position: absolute; left: 0; bottom: 0; width: 125px; height: 38px; }
.side-cut { position: absolute; left: 13px; bottom: 0; width: 16px; height: 10px; }

.scrollbar { width: 15px; background: #eef0f4; padding: 93px 2px 0; flex: none; }
.thumb { display: block; width: 11px; height: 746px; background: #a5a6aa; border-radius: 6px; }

/* windows taskbar */
.taskbar { height: 50px; background: #eff0f2; display: flex; align-items: center; flex: none; }
.start { width: 20px; height: 20px; margin-left: 20px; flex: none; }
.tb-search { width: 430px; height: 50px; margin-left: 20px; padding: 0 0 3px 15px; background: #fff; border: 1px solid #d0d2d6; display: flex; align-items: center; font-size: 21px; letter-spacing: -.2px; color: #444; flex: none; }
.tb-glass { width: 20px; height: 20px; margin-right: 14px; }
.taskview { width: 20px; height: 20px; margin-left: 20px; flex: none; }
.tb-apps { display: flex; margin-left: 23px; }
.tb-app { width: 62px; height: 50px; display: flex; align-items: center; justify-content: center; position: relative; }
.tb-ic { width: 30px; height: 30px; }
.tb-hot { background: linear-gradient(#f8f9fa, #f8f9fa) no-repeat left top / 58px 100%; }
.tb-run::after { content: ""; position: absolute; left: 5px; right: 6px; bottom: 0; height: 3px; background: #0a78d4; }
.tb-hot::after { left: 0; right: 4px; }
.tb-k { fill: #fff; font: 11px "Noto Sans", sans-serif; }
.tb-https { fill: #fff; font: 700 6px "Noto Sans", sans-serif; }
.tray { margin-left: 120px; display: flex; align-items: center; flex: 1; }
.sun { width: 24px; height: 28px; }
.temp { margin-left: 14px; font: 18px "Noto Sans", sans-serif; letter-spacing: -.5px; color: #222; }
.tray-ic { width: 20px; height: 20px; margin-left: 10px; }
.tray-caret { margin-left: 19px; }
.tray-wifi { margin-left: 13px; }
.tray-spk { margin-left: 6px; }
.ime { margin-left: 14px; width: 20px; height: 22px; border: 1px solid #333; font-size: 14px; line-height: 19px; text-align: center; }
.clock-txt { margin-left: 18px; width: 82px; display: flex; flex-direction: column; align-items: center; font-size: 15.500px; line-height: 24px; letter-spacing: -.5px; color: #222; }
.notif { width: 20px; height: 20px; margin-left: 22px; }
```
